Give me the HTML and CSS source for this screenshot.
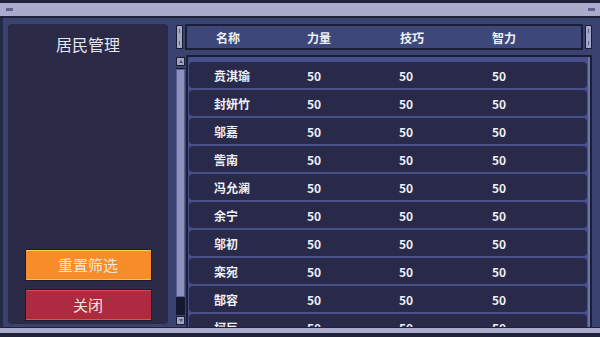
FILE: index.html
```html
<!DOCTYPE html>
<html lang="zh">
<head>
<meta charset="utf-8">
<link rel="stylesheet" href="styles.css">
</head>
<body>
<div class="topbar"><span class="tick"></span><span class="tick"></span></div>
<div class="main">
  <div class="side">
    <div class="title">居民管理</div>
    <div class="btns">
      <div class="btn reset">重置筛选</div>
      <div class="btn close">关闭</div>
    </div>
  </div>
  <div class="right">
    <div class="headrow">
      <div class="handle"><i></i><i></i></div>
      <div class="head">
        <span>名称</span><span>力量</span><span>技巧</span><span>智力</span>
      </div>
      <div class="handle"><i></i><i></i></div>
    </div>
    <div class="listrow">
      <div class="scroll">
        <div class="sbtn up"></div>
        <div class="track"><div class="thumb"></div></div>
        <div class="sbtn down"></div>
      </div>
      <div class="list">
        <div class="row"><span>贲淇瑜</span><span>50</span><span>50</span><span>50</span></div>
        <div class="row"><span>封妍竹</span><span>50</span><span>50</span><span>50</span></div>
        <div class="row"><span>邬嘉</span><span>50</span><span>50</span><span>50</span></div>
        <div class="row"><span>訾南</span><span>50</span><span>50</span><span>50</span></div>
        <div class="row"><span>冯允澜</span><span>50</span><span>50</span><span>50</span></div>
        <div class="row"><span>余宁</span><span>50</span><span>50</span><span>50</span></div>
        <div class="row"><span>邬初</span><span>50</span><span>50</span><span>50</span></div>
        <div class="row"><span>栾宛</span><span>50</span><span>50</span><span>50</span></div>
        <div class="row"><span>郜容</span><span>50</span><span>50</span><span>50</span></div>
        <div class="row"><span>柯巨</span><span>50</span><span>50</span><span>50</span></div>
      </div>
    </div>
  </div>
</div>
<div class="bottombar"></div>
</body>
</html>
```
FILE: styles.css
```css
html, body { margin: 0; padding: 0; }
body {
  width: 600px; height: 337px; overflow: hidden;
  background: #3a4270;
  font-family: "Noto Sans CJK SC", "Noto Sans", sans-serif;
  color: #eef0f6;
  display: flex; flex-direction: column;
}
.topbar {
  height: 13px;
  border-top: 3px solid #1f2238;
  border-bottom: 2px solid #1f2238;
  background: #a8acca;
  display: flex; justify-content: space-between; align-items: center;
  padding: 0 5px 0 6px;
  flex: none;
}
.tick { width: 7px; height: 3px; background: #5d6290; }
.main {
  flex: 1; min-height: 0;
  display: flex; gap: 8px;
  padding: 6px 8px 0 5px;
  border-left: 3px solid #252a48;
}
.side {
  width: 160px; flex: none;
  margin-bottom: 3px;
  background: #2b2a47;
  border-radius: 4px;
  display: flex; flex-direction: column;
}
.title {
  text-align: center; font-size: 16px; line-height: 20px;
  margin-top: 10px; color: #e6e7ee;
}
.btns {
  margin-top: auto; margin-bottom: 3px;
  display: flex; flex-direction: column; align-items: center; gap: 8px;
}
.btn {
  width: 127px; height: 32px; box-sizing: border-box;
  text-align: center; font-size: 15px; line-height: 30px;
  border: 1px solid #1c1c2c;
  color: #f3e6dc;
}
.reset {
  background: #f68c2a;
  box-shadow: inset 0 1px 0 #f6d24c, inset 0 -1px 0 #f0c040;
}
.close {
  background: #ad2a40;
  box-shadow: inset 0 1px 0 #d84a4c, inset 0 -1px 0 #d85a38;
}
.right {
  flex: 1; min-width: 0;
  display: flex; flex-direction: column; gap: 5px;
}
.headrow { display: flex; height: 26px; gap: 2px; flex: none; }
.handle {
  width: 7px; margin: 1px 0; box-sizing: border-box;
  background: #a4a8c8; border: 1px solid #1b1e34;
  display: flex; flex-direction: column; justify-content: space-between; align-items: center;
  padding: 3px 0;
}
.handle i { display: block; width: 1px; height: 4px; background: #5c6190; }
.head {
  flex: 1; box-sizing: border-box;
  background: #3d477a; border: 2px solid #1b1e34;
  display: grid; grid-template-columns: 91px 93px 92px 1fr;
  align-items: center;
  padding-left: 29px;
  font-size: 12px; font-weight: bold;
}
.listrow { flex: 1; min-height: 0; display: flex; gap: 1px; }
.scroll {
  width: 9px; flex: none; display: flex; flex-direction: column;
  padding-top: 2px; padding-bottom: 2px; box-sizing: border-box;
}
.sbtn {
  height: 9px; box-sizing: border-box; background: #9fa3c4;
  border: 1px solid #1b1e34; position: relative;
}
.sbtn::after {
  content: ""; position: absolute; left: 2px; top: 2px;
  border-left: 2px solid transparent; border-right: 2px solid transparent;
}
.up::after { border-bottom: 3px solid #4a5080; }
.down::after { border-top: 3px solid #4a5080; }
.track { flex: 1; background: #151930; margin: 2px 0 1px; display: flex; flex-direction: column; }
.thumb { height: 228px; background: #8c92bc; border: 1px solid #5a6194; box-sizing: border-box; margin-top: 1px; }
.list {
  flex: 1; min-width: 0; overflow: hidden;
  border: 2px solid #1b1e34; border-bottom: none;
  background: #47508a;
  padding: 5px 3px 0 1px;
  display: flex; flex-direction: column; gap: 2px;
  box-shadow: inset -2px 0 0 #6a74a8;
}
.row {
  height: 26px; flex: none;
  background: #29294a; border-radius: 4px;
  display: grid; grid-template-columns: 93px 92px 93px 1fr;
  align-items: center;
  padding-left: 25px;
  font-size: 12px; font-weight: bold;
}
.bottombar {
  height: 5px; flex: none;
  background: #a8acca;
  border-top: 1px solid #1f2238;
  border-bottom: 4px solid #1f2238;
}
```
